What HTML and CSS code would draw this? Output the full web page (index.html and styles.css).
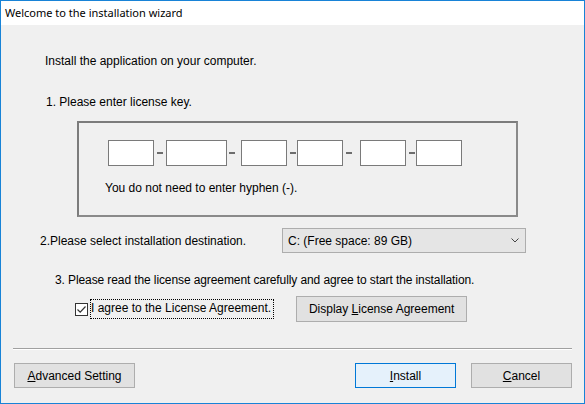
FILE: index.html
```html
<!DOCTYPE html>
<html lang="en">
<head>
<meta charset="UTF-8" />
<title>Welcome to the installation wizard</title>
<link rel="stylesheet" href="styles.css">
</head>
<body>
<div class="window">
  <div class="titlebar">Welcome to the installation wizard</div>

  <div class="content">
    <p class="intro">Install the application on your computer.</p>

    <p class="step1">1. Please enter license key.</p>

    <div class="groupbox">
      <div class="keyrow">
        <input type="text" class="key">
        <span class="dash d1"></span>
        <input type="text" class="key wide">
        <span class="dash d2"></span>
        <input type="text" class="key">
        <span class="dash d3"></span>
        <input type="text" class="key">
        <span class="dash d4"></span>
        <input type="text" class="key">
        <span class="dash d5"></span>
        <input type="text" class="key">
      </div>
      <p class="hint">You do not need to enter hyphen (-).</p>
    </div>

    <div class="dest-row">
      <span class="dest-label">2.Please select installation destination.</span>
      <div class="combo">
        <span>C: (Free space: 89 GB)</span>
        <svg class="chev" width="8" height="5" viewBox="0 0 8 5"><path d="M0.5 0.5 L4 4 L7.5 0.5" fill="none" stroke="#444" stroke-width="1"/></svg>
      </div>
    </div>

    <p class="step3">3. Please read the license agreement carefully and agree to start the installation.</p>

    <div class="agree-row">
      <span class="checkbox">
        <svg width="11" height="11" viewBox="0 0 11 11"><path d="M1.5 5.5 L4.2 8.2 L9.5 2.5" fill="none" stroke="#333" stroke-width="1.2"/></svg>
      </span>
      <span class="agree-label">I agree to the License Agreement.</span>
      <button class="btn display-btn">Display <u>L</u>icense Agreement</button>
    </div>

    <div class="separator"></div>

    <div class="footer">
      <button class="btn adv-btn"><u>A</u>dvanced Setting</button>
      <div class="footer-right">
        <button class="btn primary"><u>I</u>nstall</button>
        <button class="btn"><u>C</u>ancel</button>
      </div>
    </div>
  </div>
</div>
</body>
</html>
```

FILE: styles.css
```css
html, body {
  margin: 0;
  padding: 0;
  background: #f0f0f0;
}
.window {
  box-sizing: border-box;
  width: 585px;
  height: 404px;
  border: 1px solid #1883d7;
  background: #f0f0f0;
  font-family: "Liberation Sans", Arial, sans-serif;
  font-size: 12px;
  color: #000;
}
.titlebar {
  height: 24px;
  line-height: 24px;
  background: #fff;
  padding-left: 4px;
  font-family: "Noto Sans", "Open Sans", sans-serif;
  font-size: 11px;
  color: #000;
}
p {
  margin: 0;
  line-height: 15px;
}
.intro {
  margin-top: 29px;
  padding-left: 44px;
}
.step1 {
  margin-top: 26px;
  padding-left: 45px;
}
.groupbox {
  box-sizing: border-box;
  margin-top: 11px;
  margin-left: 76px;
  width: 441px;
  height: 96px;
  border: 2px solid #7c7c7c;
  border-right-color: #8a8a8a;
  border-bottom-color: #8a8a8a;
  padding: 17px 0 0 29px;
}
.keyrow {
  display: flex;
  align-items: center;
}
.key {
  box-sizing: border-box;
  width: 46px;
  height: 26px;
  margin: 0;
  padding: 0;
  border: 1px solid #7a7a7a;
  background: #fff;
}
.key.wide {
  width: 61px;
}
.dash {
  width: 6px;
  height: 2px;
  background: #6d6d6d;
}
.d1 { margin: 0 3px 0 3px; }
.d2 { margin: 0 6px 0 2px; }
.d3 { margin: 0 1px 0 3px; }
.d4 { margin: 0 8px 0 3px; }
.d5 { margin: 0 1px 0 3px; }
.hint {
  margin-top: 15px;
  margin-left: -3px;
}
.dest-row {
  display: flex;
  align-items: center;
  margin-top: 11px;
  padding-left: 39px;
}
.dest-label {
  width: 242px;
}
.combo {
  box-sizing: border-box;
  width: 244px;
  height: 25px;
  border: 1px solid #adadad;
  background: #e5e5e5;
  display: flex;
  align-items: center;
  justify-content: space-between;
  padding: 0 6px 0 5px;
}
.step3 {
  margin-top: 20px;
  padding-left: 54px;
  letter-spacing: -0.1px;
}
.agree-row {
  display: flex;
  align-items: center;
  margin-top: 8px;
  padding-left: 74px;
}
.checkbox {
  box-sizing: border-box;
  width: 13px;
  height: 13px;
  border: 1px solid #333;
  background: #fff;
  display: flex;
  align-items: center;
  justify-content: center;
}
.agree-label {
  margin-left: 2px;
  padding: 1px 2px 2px 0;
  border: 1px dotted #000;
  line-height: 15px;
}
.btn {
  box-sizing: border-box;
  height: 25px;
  width: 101px;
  margin: 0;
  padding: 0;
  border: 1px solid #adadad;
  background: #e1e1e1;
  font-family: "Liberation Sans", Arial, sans-serif;
  font-size: 12px;
  color: #000;
}
.btn u {
  text-decoration: underline;
}
.display-btn {
  width: 171px;
  height: 26px;
  margin-left: 22px;
}
.separator {
  margin: 26px 12px 0 12px;
  height: 1px;
  background: #a0a0a0;
  border-bottom: 1px solid #fff;
}
.footer {
  display: flex;
  justify-content: space-between;
  margin-top: 13px;
  padding: 0 12px 0 13px;
}
.adv-btn {
  width: 121px;
}
.footer-right {
  display: flex;
  gap: 15px;
}
.btn.primary {
  border-color: #0078d7;
  background: #e5f1fb;
}
```
